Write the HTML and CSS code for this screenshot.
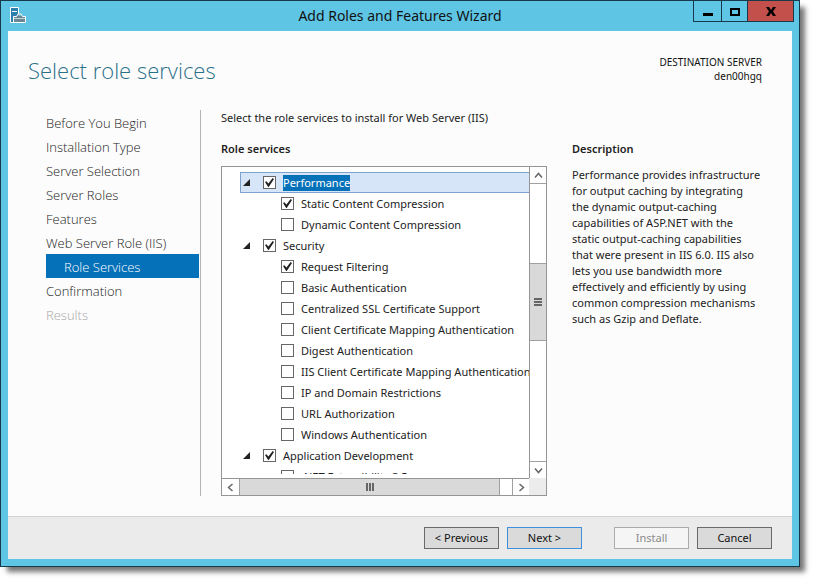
FILE: index.html
```html
<!DOCTYPE html>
<html lang="en">
<head>
<meta charset="utf-8">
<title>Add Roles and Features Wizard</title>
<meta name="viewport" content="width=device-width, initial-scale=1">
<link rel="stylesheet" href="styles.css">
</head>
<body>
<div class="window">
  <header class="titlebar">
    <svg class="app-icon" viewBox="0 0 16 16" aria-hidden="true">
      <path d="M0.500 0.500h8v15h-8z" fill="#2f7fae" stroke="#fff"/>
      <path d="M2 4.500h5" stroke="#fff"/>
      <path d="M3.500 15.500v-6h3l1.500-2.500h3l1.500 2.500h3v6z" fill="#6b8792" stroke="#fff"/>
      <path d="M8 9l1-1h1.500l1 1z" fill="#5fc4e3"/>
      <path d="M4 11.500h11" stroke="#c3d5dc"/>
    </svg>
    <span class="window-title">Add Roles and Features Wizard</span>
    <div class="window-controls">
      <button class="control" aria-label="Minimize"><svg viewBox="0 0 10 9"><path d="M0 6h10v3H0z"/></svg></button>
      <button class="control maximize" aria-label="Maximize"><svg viewBox="0 0 10 9"><path fill-rule="evenodd" d="M0 1h10v8H0zM2 3v4h6V3z"/></svg></button>
      <button class="control close" aria-label="Close"><svg viewBox="0 0 10 9"><path d="M0 0h3l2 3 2-3h3L7 4.500 10 9H7L5 6 3 9H0l3-4.500z"/></svg></button>
    </div>
  </header>
  <div class="client">
    <div class="heading">
      <h1>Select role services</h1>
      <div class="destination">
        <div>DESTINATION SERVER</div>
        <div>den00hgq</div>
      </div>
    </div>
    <div class="content">
      <nav class="steps">
        <a href="#">Before You Begin</a>
        <a href="#">Installation Type</a>
        <a href="#">Server Selection</a>
        <a href="#">Server Roles</a>
        <a href="#">Features</a>
        <a href="#">Web Server Role (IIS)</a>
        <a href="#" class="current" aria-current="step">Role Services</a>
        <a href="#">Confirmation</a>
        <a class="unavailable">Results</a>
      </nav>
      <main class="panel">
        <p class="intro">Select the role services to install for Web Server (IIS)</p>
        <section class="services">
          <h2>Role services</h2>
          <div class="listbox">
            <div class="viewport">
              <ul class="tree">
                <li>
                  <div class="row selected"><button class="expander" aria-label="Collapse Performance"></button><label><input type="checkbox" checked><span>Performance</span></label></div>
                  <ul>
                    <li class="row"><label><input type="checkbox" checked><span>Static Content Compression</span></label></li>
                    <li class="row"><label><input type="checkbox"><span>Dynamic Content Compression</span></label></li>
                  </ul>
                </li>
                <li>
                  <div class="row"><button class="expander" aria-label="Collapse Security"></button><label><input type="checkbox" checked><span>Security</span></label></div>
                  <ul>
                    <li class="row"><label><input type="checkbox" checked><span>Request Filtering</span></label></li>
                    <li class="row"><label><input type="checkbox"><span>Basic Authentication</span></label></li>
                    <li class="row"><label><input type="checkbox"><span>Centralized SSL Certificate Support</span></label></li>
                    <li class="row"><label><input type="checkbox"><span>Client Certificate Mapping Authentication</span></label></li>
                    <li class="row"><label><input type="checkbox"><span>Digest Authentication</span></label></li>
                    <li class="row"><label><input type="checkbox"><span>IIS Client Certificate Mapping Authentication</span></label></li>
                    <li class="row"><label><input type="checkbox"><span>IP and Domain Restrictions</span></label></li>
                    <li class="row"><label><input type="checkbox"><span>URL Authorization</span></label></li>
                    <li class="row"><label><input type="checkbox"><span>Windows Authentication</span></label></li>
                  </ul>
                </li>
                <li>
                  <div class="row"><button class="expander" aria-label="Collapse Application Development"></button><label><input type="checkbox" checked><span>Application Development</span></label></div>
                  <ul>
                    <li class="row"><label><input type="checkbox"><span>.NET Extensibility 3.5</span></label></li>
                  </ul>
                </li>
              </ul>
            </div>
            <div class="scrollbar vertical">
              <button aria-label="Scroll up"><svg viewBox="0 0 9 9"><path d="M1 6.500l3.500-4 3.500 4"/></svg></button>
              <div class="track before"></div>
              <div class="thumb"><svg viewBox="0 0 8 8"><path d="M0 1h8M0 4h8M0 7h8"/></svg></div>
              <div class="track after"></div>
              <button aria-label="Scroll down"><svg viewBox="0 0 9 9"><path d="M1 2.500l3.500 4 3.500-4"/></svg></button>
            </div>
            <div class="scrollbar horizontal">
              <button aria-label="Scroll left"><svg viewBox="0 0 9 9"><path d="M6.500 1l-4 3.500 4 3.500"/></svg></button>
              <div class="thumb"><svg viewBox="0 0 8 8"><path d="M1 0v8M4 0v8M7 0v8"/></svg></div>
              <div class="track after"></div>
              <button aria-label="Scroll right"><svg viewBox="0 0 9 9"><path d="M2.500 1l4 3.500-4 3.500"/></svg></button>
            </div>
            <div class="corner"></div>
          </div>
        </section>
        <section class="description">
          <h2>Description</h2>
          <p>Performance provides infrastructure for output caching by integrating the dynamic output-caching capabilities of ASP.NET with the static output-caching capabilities that were present in IIS 6.0. IIS also lets you use bandwidth more effectively and efficiently by using common compression mechanisms such as Gzip and Deflate.</p>
        </section>
      </main>
    </div>
    <footer class="actions">
      <button>&lt; Previous</button>
      <button class="default">Next &gt;</button>
      <button class="install" disabled>Install</button>
      <button>Cancel</button>
    </footer>
  </div>
</div>
</body>
</html>
```

FILE: styles.css
```css
* {
  box-sizing: border-box;
}

body {
  display: flex;
  flex-direction: column;
  height: 100vh;
  margin: 0;
  padding: 0 15px 15px 0;
  background: #fff;
  color: #222;
  font: 11px/16px "Noto Sans", "Open Sans", sans-serif;
}

h1, h2, p, ul {
  margin: 0;
  padding: 0;
}

ul {
  list-style: none;
}

button {
  margin: 0;
  padding: 0;
  font: inherit;
  color: inherit;
}

.window {
  display: flex;
  flex: 1;
  flex-direction: column;
  min-height: 400px;
  padding: 0 7px 7px;
  border: 1px solid #17394a;
  background: #5fc5e4;
  box-shadow: 6px 6px 5px -1px #777;
}

/* Title bar */

.titlebar {
  display: grid;
  grid-template-columns: 1fr auto 1fr;
  align-items: start;
  flex: none;
  height: 30px;
}

.app-icon {
  width: 16px;
  height: 16px;
  margin: 6px 0 0 2px;
  fill: none;
}

.window-title {
  color: #111;
  font-size: 14px;
  line-height: 30px;
}

.window-controls {
  display: flex;
  justify-self: end;
  height: 21px;
  margin-right: -2px;
  border: 1px solid #17394a;
  border-top: 0;
}

.control {
  display: flex;
  align-items: center;
  justify-content: center;
  width: 28px;
  border: 0;
  border-right: 1px solid #17394a;
  background: transparent;
}

.control svg {
  width: 10px;
  height: 9px;
}

.maximize {
  width: 26px;
}

.close {
  width: 45px;
  border-right: 0;
  background: #c4504c;
}

/* Page heading */

.client {
  display: flex;
  flex: 1;
  flex-direction: column;
  min-height: 0;
  background: #fcfcfc;
}

.heading {
  display: flex;
  flex: none;
  justify-content: space-between;
  height: 79px;
  padding: 24px 30px 0 20px;
}

h1 {
  color: #2b7089;
  font: 300 22px/30px "Open Sans", "Noto Sans", sans-serif;
}

.destination {
  color: #111;
  font-size: 10px;
  line-height: 14px;
  text-align: right;
}

/* Steps and panel */

.content {
  display: grid;
  flex: 1;
  grid-template-columns: 155px 1fr;
  gap: 20px;
  min-height: 0;
  padding: 0 30px 20px 38px;
}

.steps {
  display: flex;
  flex-direction: column;
  padding-right: 1px;
  border-right: 1px solid #b4b4b4;
}

.steps a {
  padding-top: 2px;
  color: #222;
  font: 300 13px/22px "Open Sans", "Noto Sans", sans-serif;
  text-decoration: none;
}

.steps .current {
  padding-left: 18px;
  background: #0571b9;
  color: #fff;
}

.steps .unavailable {
  color: #a8a8a8;
}

.panel {
  display: grid;
  grid-template-columns: minmax(0, 326fr) minmax(0, 190fr);
  grid-template-rows: 31px minmax(0, 1fr);
  column-gap: 25px;
  min-height: 0;
}

.intro {
  grid-column: 1 / -1;
}

.services {
  display: flex;
  flex-direction: column;
  min-height: 0;
}

h2 {
  font-size: 11px;
  font-weight: 600;
  line-height: 16px;
}

.services h2 {
  margin-bottom: 9px;
}

.description h2 {
  margin-bottom: 10px;
}

/* List box */

.listbox {
  display: grid;
  flex: 1;
  grid-template-columns: minmax(0, 1fr) 17px;
  grid-template-rows: minmax(0, 1fr) 17px;
  min-height: 0;
  border: 1px solid #959595;
  background: #fff;
}

.viewport {
  display: flex;
  min-height: 0;
  padding: 5px 0 4px 18px;
}

.tree {
  flex: 1;
  min-width: 0;
  overflow: hidden;
}

.row {
  display: flex;
  align-items: center;
  height: 21px;
  padding: 0 3px;
  white-space: nowrap;
}

.row label {
  display: flex;
  align-items: center;
  gap: 7px;
}

.tree ul .row {
  padding-left: 41px;
}

.selected {
  padding: 0 2px;
  border: 1px solid #7da2ce;
  border-right: 0;
  background: #d6e5f8;
}

.selected span {
  background: #0571b9;
  color: #fff;
}

.expander {
  width: 7px;
  height: 7px;
  margin-right: 13px;
  border: 0;
  background: #222;
  clip-path: polygon(100% 0, 100% 100%, 0 100%);
}

input[type="checkbox"] {
  display: grid;
  place-items: center;
  flex: none;
  appearance: none;
  width: 13px;
  height: 13px;
  margin: 0;
  border: 1px solid #666;
  background: #fff;
}

input:checked::before {
  content: "";
  width: 9px;
  height: 9px;
  background: #222;
  clip-path: polygon(0 45%, 15% 35%, 38% 62%, 85% 0, 100% 10%, 42% 100%, 35% 100%);
}

.scrollbar {
  display: flex;
}

.vertical {
  flex-direction: column;
  border-left: 1px solid #959595;
}

.horizontal {
  border-top: 1px solid #959595;
}

.scrollbar button,
.thumb {
  display: flex;
  align-items: center;
  justify-content: center;
}

.scrollbar button {
  flex: 0 0 17px;
  border: 0 solid #a0a0a0;
  background: #fff;
}

.scrollbar svg {
  width: 9px;
  height: 9px;
  fill: none;
  stroke: #666;
  stroke-width: 1.5;
}

.scrollbar .thumb svg {
  width: 8px;
  height: 8px;
  stroke-width: 2;
}

.thumb {
  border: 0 solid #a0a0a0;
  background: #d9d9d9;
}

.vertical button:first-child {
  border-bottom-width: 1px;
}

.vertical button:last-child {
  border-top-width: 1px;
}

.vertical .before {
  flex: 80;
}

.vertical .thumb {
  flex: 76;
  border-width: 1px 0;
}

.vertical .after {
  flex: 121;
}

.horizontal .thumb {
  flex: 261;
  border-width: 0 1px;
}

.horizontal .after {
  flex: 12;
}

.horizontal button:last-child {
  border-left-width: 1px;
}

.corner {
  background: #ececec;
}

/* Footer */

.actions {
  display: flex;
  flex: none;
  gap: 8px;
  justify-content: flex-end;
  padding: 10px 20px;
  border-top: 1px solid #d2d2d2;
  background: #ebebeb;
}

.actions button {
  width: 75px;
  height: 22px;
  border: 1px solid #6a6a6a;
  background: #dadada;
  color: #111;
}

.actions .default {
  border-color: #3f8fdc;
}

.actions .install {
  margin-left: 24px;
  border-color: #ababab;
  background: #f5f5f5;
  color: #8a8a8a;
}
```
